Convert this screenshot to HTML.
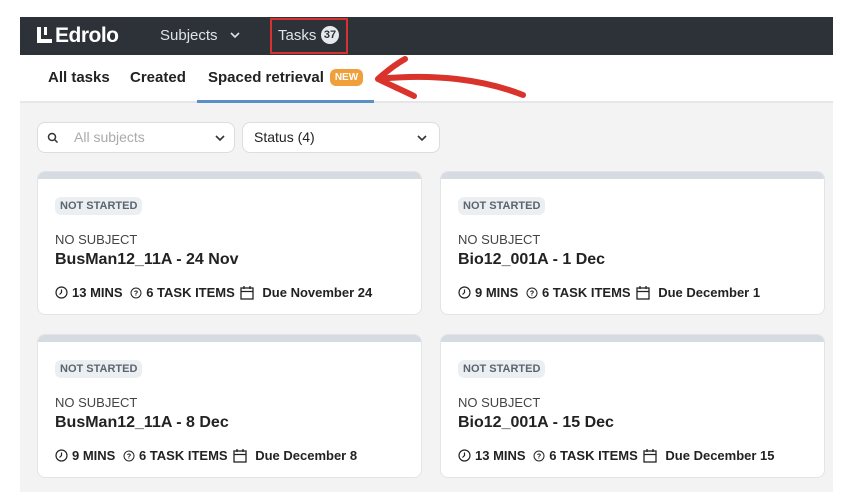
<!DOCTYPE html>
<html><head><style>
*{margin:0;padding:0;box-sizing:border-box}
body{width:850px;height:500px;background:#fff;font-family:"Liberation Sans",sans-serif;position:relative;overflow:hidden}
.abs{position:absolute}
.hdr{left:20px;top:17px;width:813px;height:38px;background:#2c3238}
.gray{left:20px;top:103px;width:813px;height:389px;background:#f3f3f3}
.card{position:absolute;width:385px;height:144px;background:#fff;border:1px solid #e2e4e6;border-radius:8px;overflow:hidden}
.card .strip{height:7px;background:#d5dbe0}
.badge{position:absolute;left:17px;top:25px;background:#eceff2;color:#5a6570;font-size:11px;font-weight:bold;padding:3px 5px;border-radius:6px}
.subj{position:absolute;left:17px;top:60px;font-size:13px;color:#444}
.title{position:absolute;left:17px;top:79px;font-size:16px;font-weight:bold;color:#222}
.meta{position:absolute;left:17px;top:113px;font-size:13px;font-weight:bold;color:#222;display:flex;align-items:center;gap:4px;white-space:nowrap}
.meta svg{flex:none}
.sel{position:absolute;top:122px;height:31px;background:#fff;border:1px solid #ddd;border-radius:8px;font-size:14px}
</style></head><body>
<div class="abs hdr"></div>
<div class="abs" style="left:37px;top:24px;color:#fff;font-size:21px;font-weight:bold;letter-spacing:-0.5px">
<span style="display:inline-block;width:15px;height:16px;border-left:4px solid #fff;border-bottom:4px solid #fff;vertical-align:-1px;margin-right:3px;position:relative"><span style="position:absolute;left:3px;top:0;width:3px;height:8px;background:#fff"></span></span>Edrolo</div>
<div class="abs" style="left:160px;top:27px;color:#dfe3e6;font-size:15px">Subjects</div>
<svg class="abs" style="left:229px;top:30px" width="12" height="10"><path d="M2 3l4 4 4-4" stroke="#dfe3e6" stroke-width="1.6" fill="none"/></svg>
<div class="abs" style="left:270px;top:18px;width:78px;height:36px;border:2px solid #d63232"></div>
<div class="abs" style="left:278px;top:27px;color:#dfe3e6;font-size:15px">Tasks</div>
<div class="abs" style="left:321px;top:26px;width:18px;height:18px;border-radius:9px;background:#e6eaec;color:#2c3238;font-size:11px;font-weight:bold;text-align:center;line-height:18px">37</div>
<div class="abs" style="left:48px;top:69px;font-size:15px;font-weight:bold;color:#222">All tasks</div>
<div class="abs" style="left:130px;top:69px;font-size:15px;font-weight:bold;color:#222">Created</div>
<div class="abs" style="left:208px;top:69px;font-size:15px;font-weight:bold;color:#222">Spaced retrieval</div>
<div class="abs" style="left:330px;top:69px;width:33px;height:17px;border-radius:6px;background:#f0a03a;color:#fff;font-size:10px;font-weight:bold;text-align:center;line-height:17px">NEW</div>
<div class="abs" style="left:20px;top:101px;width:813px;height:2px;background:#e4e6e8"></div>
<div class="abs" style="left:197px;top:100px;width:177px;height:3px;background:#5b8fc7"></div>
<svg class="abs" style="left:360px;top:55px" width="170" height="50"><path d="M163 40 C125 25 75 18 18 24 M18 24 C28 15 36 9 45 4 M18 24 C30 30 42 35 54 41" stroke="#d9332c" stroke-width="6" fill="none" stroke-linecap="round"/></svg>
<div class="abs gray"></div>
<div class="sel" style="left:37px;width:198px"><svg class="abs" style="left:9px;top:9px" width="12" height="12"><circle cx="5" cy="5" r="3.5" stroke="#333" stroke-width="1.5" fill="none"/><path d="M7.5 7.5l3 3" stroke="#333" stroke-width="1.5"/></svg><span class="abs" style="left:36px;top:6px;color:#aaa">All subjects</span><svg class="abs" style="left:176px;top:10px" width="12" height="10"><path d="M2 3l4 4 4-4" stroke="#333" stroke-width="1.6" fill="none"/></svg></div>
<div class="sel" style="left:242px;width:198px"><span class="abs" style="left:11px;top:6px;color:#222">Status (4)</span><svg class="abs" style="left:173px;top:10px" width="12" height="10"><path d="M2 3l4 4 4-4" stroke="#333" stroke-width="1.6" fill="none"/></svg></div>

<div class="card" style="left:37px;top:171px"><div class="strip"></div><div class="badge">NOT STARTED</div><div class="subj">NO SUBJECT</div><div class="title">BusMan12_11A - 24 Nov</div>
<div class="meta"><svg width="13" height="13"><circle cx="6.5" cy="6.5" r="5.5" stroke="#222" stroke-width="1.2" fill="none"/><path d="M6.5 3.5v3l-2 2" stroke="#222" stroke-width="1.2" fill="none"/></svg>13 MINS&nbsp;<svg width="12" height="12"><circle cx="6" cy="6" r="5" stroke="#222" stroke-width="1" fill="none"/><text x="6" y="8.5" font-size="7" text-anchor="middle" font-family="Liberation Sans">?</text></svg>6 TASK ITEMS<svg width="16" height="15"><rect x="2" y="3" width="12" height="11" stroke="#222" stroke-width="1.3" fill="none"/><path d="M2 6.5h12M5 1v3M11 1v3" stroke="#222" stroke-width="1.3"/></svg>&nbsp;Due November 24</div></div>

<div class="card" style="left:440px;top:171px"><div class="strip"></div><div class="badge">NOT STARTED</div><div class="subj">NO SUBJECT</div><div class="title">Bio12_001A - 1 Dec</div>
<div class="meta"><svg width="13" height="13"><circle cx="6.5" cy="6.5" r="5.5" stroke="#222" stroke-width="1.2" fill="none"/><path d="M6.5 3.5v3l-2 2" stroke="#222" stroke-width="1.2" fill="none"/></svg>9 MINS&nbsp;<svg width="12" height="12"><circle cx="6" cy="6" r="5" stroke="#222" stroke-width="1" fill="none"/><text x="6" y="8.5" font-size="7" text-anchor="middle" font-family="Liberation Sans">?</text></svg>6 TASK ITEMS<svg width="16" height="15"><rect x="2" y="3" width="12" height="11" stroke="#222" stroke-width="1.3" fill="none"/><path d="M2 6.5h12M5 1v3M11 1v3" stroke="#222" stroke-width="1.3"/></svg>&nbsp;Due December 1</div></div>

<div class="card" style="left:37px;top:334px"><div class="strip"></div><div class="badge">NOT STARTED</div><div class="subj">NO SUBJECT</div><div class="title">BusMan12_11A - 8 Dec</div>
<div class="meta"><svg width="13" height="13"><circle cx="6.5" cy="6.5" r="5.5" stroke="#222" stroke-width="1.2" fill="none"/><path d="M6.5 3.5v3l-2 2" stroke="#222" stroke-width="1.2" fill="none"/></svg>9 MINS&nbsp;<svg width="12" height="12"><circle cx="6" cy="6" r="5" stroke="#222" stroke-width="1" fill="none"/><text x="6" y="8.5" font-size="7" text-anchor="middle" font-family="Liberation Sans">?</text></svg>6 TASK ITEMS<svg width="16" height="15"><rect x="2" y="3" width="12" height="11" stroke="#222" stroke-width="1.3" fill="none"/><path d="M2 6.5h12M5 1v3M11 1v3" stroke="#222" stroke-width="1.3"/></svg>&nbsp;Due December 8</div></div>

<div class="card" style="left:440px;top:334px"><div class="strip"></div><div class="badge">NOT STARTED</div><div class="subj">NO SUBJECT</div><div class="title">Bio12_001A - 15 Dec</div>
<div class="meta"><svg width="13" height="13"><circle cx="6.5" cy="6.5" r="5.5" stroke="#222" stroke-width="1.2" fill="none"/><path d="M6.5 3.5v3l-2 2" stroke="#222" stroke-width="1.2" fill="none"/></svg>13 MINS&nbsp;<svg width="12" height="12"><circle cx="6" cy="6" r="5" stroke="#222" stroke-width="1" fill="none"/><text x="6" y="8.5" font-size="7" text-anchor="middle" font-family="Liberation Sans">?</text></svg>6 TASK ITEMS<svg width="16" height="15"><rect x="2" y="3" width="12" height="11" stroke="#222" stroke-width="1.3" fill="none"/><path d="M2 6.5h12M5 1v3M11 1v3" stroke="#222" stroke-width="1.3"/></svg>&nbsp;Due December 15</div></div>
</body></html>
